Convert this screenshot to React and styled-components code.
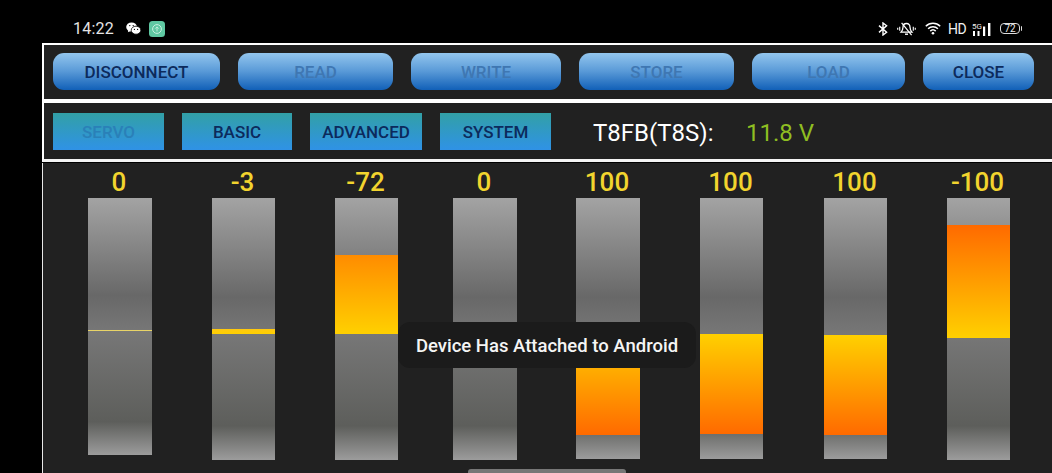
import React from 'react'
import styled, { createGlobalStyle } from 'styled-components'

const GlobalStyle = createGlobalStyle`
body {
    margin: 0;
    background: #000;
    font-family: Roboto, "Liberation Sans", sans-serif;
    overflow: hidden;
}
`

const channels = [
    { value: '0', gap: 0, trackWidth: 64, trackHeight: 257, fillTop: 132, fillHeight: 1, from: '#e8d468', to: '#e8d468' },
    { value: '-3', gap: 60, trackWidth: 63, trackHeight: 262, fillTop: 131, fillHeight: 5, from: '#ffc810', to: '#ffd000' },
    { value: '-72', gap: 60, trackWidth: 63, trackHeight: 262, fillTop: 57, fillHeight: 79, from: '#ff8c00', to: '#ffd000' },
    { value: '0', gap: 55, trackWidth: 64, trackHeight: 262 },
    { value: '100', gap: 59, trackWidth: 64, trackHeight: 261, fillTop: 136, fillHeight: 101, from: '#ffd000', to: '#ff6a00' },
    { value: '100', gap: 60, trackWidth: 63, trackHeight: 261, fillTop: 136, fillHeight: 100, from: '#ffd000', to: '#ff6a00' },
    { value: '100', gap: 61, trackWidth: 63, trackHeight: 261, fillTop: 137, fillHeight: 100, from: '#ffd000', to: '#ff6a00' },
    { value: '-100', gap: 60, trackWidth: 63, trackHeight: 262, fillTop: 27, fillHeight: 113, from: '#ff6a00', to: '#ffd000' },
]

const actions = [
    { label: 'DISCONNECT', width: 167 },
    { label: 'READ', width: 155, disabled: true },
    { label: 'WRITE', width: 150, disabled: true },
    { label: 'STORE', width: 155, disabled: true },
    { label: 'LOAD', width: 153, disabled: true },
    { label: 'CLOSE', width: 111 },
]

const tabs = [
    { label: 'SERVO', width: 111, disabled: true },
    { label: 'BASIC', width: 110 },
    { label: 'ADVANCED', width: 112 },
    { label: 'SYSTEM', width: 111 },
]

function WeChatIcon() {
    return (
        <svg width="15" height="13" viewBox="0 0 15 13">
            <ellipse cx="5.6" cy="5" rx="5.4" ry="4.6" fill="#fff" />
            <path d="M2.4 8l-.5 2.2L4.6 9z" fill="#fff" />
            <ellipse cx="10" cy="8.2" rx="4.8" ry="4" fill="#fff" stroke="#000" strokeWidth=".8" />
            <circle cx="3.8" cy="3.6" r=".7" fill="#000" />
            <circle cx="7.2" cy="3.6" r=".7" fill="#000" />
            <circle cx="8.4" cy="7.4" r=".6" fill="#000" />
            <circle cx="11.6" cy="7.4" r=".6" fill="#000" />
        </svg>
    )
}

function AppBadge() {
    return (
        <svg width="16" height="16" viewBox="0 0 16 16">
            <rect width="16" height="16" rx="3.5" fill="#5fc8a2" />
            <circle cx="8" cy="8" r="4.4" fill="none" stroke="#c8f0e0" strokeWidth="1" />
            <path d="M8 10.4V6M6.3 7.6 8 5.9l1.7 1.7" fill="none" stroke="#c8f0e0" strokeWidth=".9" />
        </svg>
    )
}

function BluetoothIcon() {
    return (
        <svg width="10" height="14" viewBox="0 0 10 14">
            <path d="M1 3.6l7.6 6.6L5 13V1l3.6 2.8L1 10.4" fill="none" stroke="#fff" strokeWidth="1.4" />
        </svg>
    )
}

function MutedBellIcon() {
    return (
        <svg width="19" height="14" viewBox="0 0 19 14">
            <path d="M9.5 1.500c-2.400 0-3.500 1.800-3.500 3.800 0 2.200-1 3.700-2 4.900h11c-1-1.200-2-2.700-2-4.900 0-2-1.100-3.800-3.500-3.800z" fill="none" stroke="#fff" strokeWidth="1.300" />
            <path d="M8 12.200h3" stroke="#fff" strokeWidth="1.400" />
            <path d="M4.600 .8l10 12.400" stroke="#fff" strokeWidth="1.200" />
            <path d="M.7 5.800v2M2.700 4.800v4M16.300 4.800v4M18.300 5.800v2" stroke="#eee" strokeWidth="1.200" />
        </svg>
    )
}

function WifiIcon() {
    return (
        <svg width="16" height="13" viewBox="0 0 16 13">
            <path d="M.8 4.200a10.200 10.200 0 0 1 14.400 0M3.100 6.700a7 7 0 0 1 9.800 0M5.300 9.100a3.900 3.900 0 0 1 5.400 0" fill="none" stroke="#fff" strokeWidth="1.500" />
            <circle cx="8" cy="11.300" r="1.300" fill="#fff" />
        </svg>
    )
}

function SignalIcon() {
    return (
        <svg width="21" height="14" viewBox="0 0 21 14">
            <text x="0" y="6.500" fontSize="8" fill="#eee" fontFamily="Roboto, sans-serif">5G</text>
            <rect x="1" y="9" width="2" height="5" fill="#fff" />
            <rect x="5.500" y="9" width="2" height="5" fill="#fff" />
            <rect x="11" y="4.500" width="2.200" height="9.500" fill="#fff" />
            <rect x="16" y="1" width="2.400" height="13" fill="#fff" />
        </svg>
    )
}

export default function App() {
    return (
        <Page>
            <GlobalStyle />
            <StatusBar>
                <Clock>14:22</Clock>
                <WeChatIcon />
                <AppBadge />
                <StatusRight>
                    <BluetoothIcon />
                    <MutedBellIcon />
                    <WifiIcon />
                    <NetworkText>HD</NetworkText>
                    <SignalIcon />
                    <Battery>72</Battery>
                </StatusRight>
            </StatusBar>

            <ActionPanel>
                {actions.map((a) => (
                    <ActionButton key={a.label} $width={a.width} $disabled={a.disabled}>{a.label}</ActionButton>
                ))}
            </ActionPanel>

            <TabPanel>
                {tabs.map((t) => (
                    <TabButton key={t.label} $width={t.width} $disabled={t.disabled}>{t.label}</TabButton>
                ))}
                <Model>T8FB(T8S):</Model>
                <Voltage>11.8 V</Voltage>
            </TabPanel>

            <SliderPanel>
                {channels.map((c, i) => (
                    <Channel key={i} $gap={c.gap} $width={c.trackWidth}>
                        <Value>{c.value}</Value>
                        <Track style={{ height: c.trackHeight }}>
                            {c.fillHeight && (
                                <Fill
                                    $from={c.from}
                                    $to={c.to}
                                    style={{ marginTop: c.fillTop, height: c.fillHeight }}
                                />
                            )}
                        </Track>
                    </Channel>
                ))}
                <Toast>Device Has Attached to Android</Toast>
                <HomeBar />
            </SliderPanel>
        </Page>
    )
}

const Page = styled.div`
width: 1052px;
height: 473px;
background: #000;
display: flex;
flex-direction: column;
overflow: hidden;
`

const StatusBar = styled.div`
height: 43px;
box-sizing: border-box;
padding: 14px 30px 0 73px;
display: flex;
align-items: center;
color: #fff;
svg { flex: none; }
> svg:nth-of-type(1) { margin-left: 12px; }
> svg:nth-of-type(2) { margin-left: 8px; }
`

const Clock = styled.span`
font-size: 16px;
color: #e4e4e4;
letter-spacing: .2px;
`

const StatusRight = styled.div`
margin-left: auto;
display: flex;
align-items: center;
gap: 7px;
> svg:nth-child(1), > svg:nth-child(2) { margin-right: 2px; }
`

const NetworkText = styled.span`
font-size: 14px;
width: 17px;
color: #f0f0f0;
letter-spacing: -.6px;
`

const Battery = styled.div`
position: relative;
width: 20px;
margin-right: 2px;
height: 11px;
box-sizing: border-box;
border: 1px solid #ddd;
border-radius: 4px;
font-size: 10px;
line-height: 9px;
text-align: center;
color: #eee;
&::after {
    content: '';
    position: absolute;
    right: -3px;
    top: 2px;
    width: 1.500px;
    height: 5px;
    border-radius: 0 2px 2px 0;
    background: #ddd;
}
`

const Panel = styled.div`
margin-left: 42px;
box-sizing: border-box;
background: #212121;
display: flex;
align-items: flex-start;
`

const ActionPanel = styled(Panel)`
height: 60px;
border-left: 2px solid #fff;
border-top: 2px solid #fff;
border-bottom: 4px solid #fff;
padding: 8px 0 0 9px;
gap: 18px;
`

const TabPanel = styled(Panel)`
height: 59px;
margin-bottom: 1px;
border-left: 2px solid #fff;
border-bottom: 3px solid #f4f4f4;
padding: 10px 0 0 9px;
gap: 18px;
`

const SliderPanel = styled(Panel)`
position: relative;
flex: 1;
border-left: 1px solid #e8e8e8;
padding-left: 45px;
`

const ActionButton = styled.div`
width: ${(p) => p.$width}px;
height: 37px;
border-radius: 11px;
background: linear-gradient(#93c6ee, #5b9bd8 48%, #1160b8);
display: flex;
align-items: center;
justify-content: center;
font-size: 17px;
font-weight: 500;
color: ${(p) => (p.$disabled ? '#3f77b2' : '#0c2a5c')};
`

const TabButton = styled.div`
width: ${(p) => p.$width}px;
height: 37px;
background: linear-gradient(#32a0a6, #2f92e6);
display: flex;
align-items: center;
justify-content: center;
font-size: 17px;
font-weight: 500;
color: ${(p) => (p.$disabled ? '#2a80b8' : '#0c2a5c')};
`

const Model = styled.span`
margin-left: 24px;
width: 135px;
font-size: 24px;
line-height: 40px;
color: #fff;
`

const Voltage = styled.span`
font-size: 24px;
line-height: 40px;
color: #8fbe22;
`

const Channel = styled.div`
width: ${(p) => p.$width}px;
margin-left: ${(p) => p.$gap}px;
display: flex;
flex-direction: column;
align-items: center;
`

const Value = styled.div`
height: 35px;
line-height: 38px;
padding-right: 2px;
font-size: 26px;
font-weight: 500;
color: #f2d42e;
white-space: nowrap;
`

const Track = styled.div`
width: 100%;
overflow: hidden;
background: linear-gradient(#a3a3a3, #686868 38%, #777 52%, #5d5e5b 87%, #9c9c9c);
`

const Fill = styled.div`
background: linear-gradient(${(p) => p.$from}, ${(p) => p.$to});
`

const Toast = styled.div`
position: absolute;
left: 355px;
top: 159px;
width: 298px;
height: 46px;
box-sizing: border-box;
padding-top: 2px;
border-radius: 12px;
background: #1b1b1b;
display: flex;
align-items: center;
justify-content: center;
font-size: 18.500px;
font-weight: 500;
color: #f5f5f5;
white-space: nowrap;
`

const HomeBar = styled.div`
position: absolute;
left: 425px;
bottom: 0;
width: 158px;
height: 4px;
border-radius: 3px 3px 0 0;
background: #777;
`
